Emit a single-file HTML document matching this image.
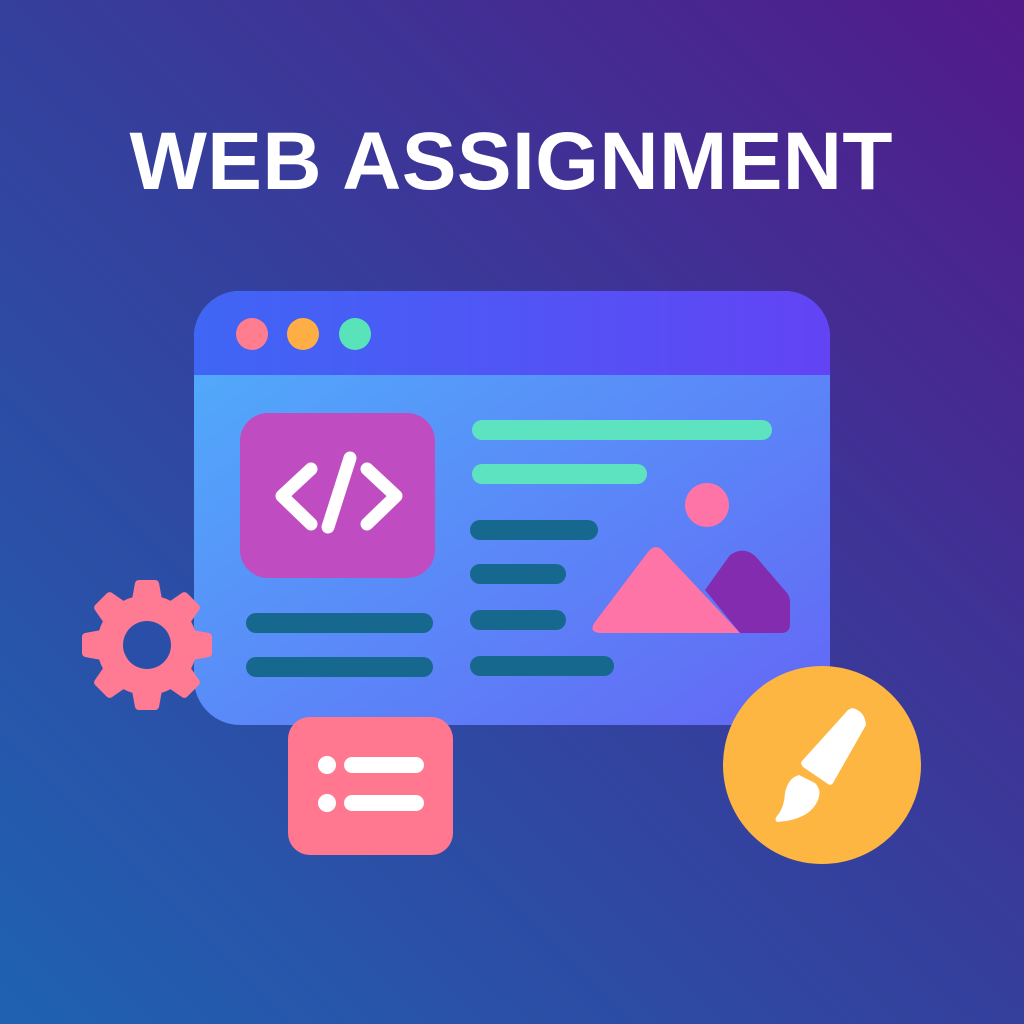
<!DOCTYPE html>
<html><head><meta charset="utf-8"><style>
html,body{margin:0;padding:0;width:1024px;height:1024px;overflow:hidden}
</style></head><body>
<svg width="1024" height="1024" viewBox="0 0 1024 1024" xmlns="http://www.w3.org/2000/svg">
<defs>
<linearGradient id="bg" x1="0" y1="1" x2="1" y2="0">
<stop offset="0" stop-color="#1f62b2"/><stop offset="0.5" stop-color="#353f9c"/><stop offset="1" stop-color="#521a8a"/>
</linearGradient>
<linearGradient id="hd" x1="0" y1="0" x2="1" y2="0">
<stop offset="0" stop-color="#3f66f5"/><stop offset="1" stop-color="#6244f5"/>
</linearGradient>
<linearGradient id="bd" x1="0" y1="0" x2="1" y2="1">
<stop offset="0" stop-color="#4fb0fb"/><stop offset="1" stop-color="#6466f5"/>
</linearGradient>
<clipPath id="win"><rect x="194" y="291" width="636" height="434" rx="46"/></clipPath>
</defs>
<rect width="1024" height="1024" fill="url(#bg)"/>
<text x="512" y="189" text-anchor="middle" font-family="Liberation Sans, sans-serif" font-weight="bold" font-size="82" fill="#fff" letter-spacing="2" textLength="765">WEB ASSIGNMENT</text>
<g clip-path="url(#win)">
<rect x="194" y="291" width="636" height="434" fill="url(#bd)"/>
<rect x="194" y="291" width="636" height="84" fill="url(#hd)"/>
</g>
<circle cx="252" cy="334" r="16" fill="#ff7d8e"/>
<circle cx="303" cy="334" r="16" fill="#ffad45"/>
<circle cx="355" cy="334" r="16" fill="#58e3b8"/>
<rect x="240" y="413" width="195" height="165" rx="28" fill="#c04cc1"/>
<g stroke="#fff" stroke-width="13" stroke-linecap="round" stroke-linejoin="round" fill="none">
<path d="M311 469 L282 496 L311 524"/><path d="M367 469 L396 496 L367 524"/><path d="M350 458 L328 527"/>
</g>
<g stroke-linecap="round" stroke-width="20">
<line x1="482" y1="430" x2="762" y2="430" stroke="#5de3c0"/>
<line x1="482" y1="474" x2="637" y2="474" stroke="#5de3c0"/>
</g>
<g stroke-linecap="round" stroke-width="20" stroke="#16688e">
<line x1="480" y1="530" x2="588" y2="530"/>
<line x1="480" y1="574" x2="556" y2="574"/>
<line x1="480" y1="620" x2="556" y2="620"/>
<line x1="480" y1="666" x2="604" y2="666"/>
<line x1="256" y1="623" x2="423" y2="623"/>
<line x1="256" y1="667" x2="423" y2="667"/>
</g>
<circle cx="707" cy="505" r="22" fill="#ff74a6"/>
<path d="M730 555 Q745 545 757 558 L787 593 Q790 597 790 602 L790 624 Q790 633 781 633 L740 633 L705 590 Z" fill="#842cb0"/>
<path d="M648 552 Q656 542 664 552 L740 633 L600 633 Q588 632 595 622 Z" fill="#ff74a6"/>
<g fill="#ff7a93" transform="translate(147,645)">
<path id="t" d="M-16 -40 L-12 -62 Q-11 -65 -8 -65 L8 -65 Q11 -65 12 -62 L16 -40 Z"/>
<use href="#t" transform="rotate(45)"/>
<use href="#t" transform="rotate(90)"/>
<use href="#t" transform="rotate(135)"/>
<use href="#t" transform="rotate(180)"/>
<use href="#t" transform="rotate(225)"/>
<use href="#t" transform="rotate(270)"/>
<use href="#t" transform="rotate(315)"/>
<circle r="50"/>
</g>
<circle cx="147" cy="645" r="24" fill="#2a4fa8"/>
<rect x="288" y="717" width="165" height="138" rx="22" fill="#ff7890"/>
<g fill="#fff">
<circle cx="327" cy="765" r="9"/><circle cx="327" cy="803" r="9"/>
</g>
<g stroke="#fff" stroke-width="16" stroke-linecap="round">
<line x1="352" y1="765" x2="416" y2="765"/><line x1="352" y1="803" x2="416" y2="803"/>
</g>
<circle cx="822" cy="765" r="99" fill="#fdb642"/>
<path d="M852 708 Q865 711 866 725 L833 783 Q831 786 828 784 L803 767 Q800 764 802 761 L848 710 Z" fill="#fff"/>
<path d="M799 775 L815 783 Q822 790 818 800 Q811 817 786 821 L777 822 Q774 820 777 816 Q784 808 785 793 Q788 778 799 775 Z" fill="#fff"/>
</svg>
</body></html>
